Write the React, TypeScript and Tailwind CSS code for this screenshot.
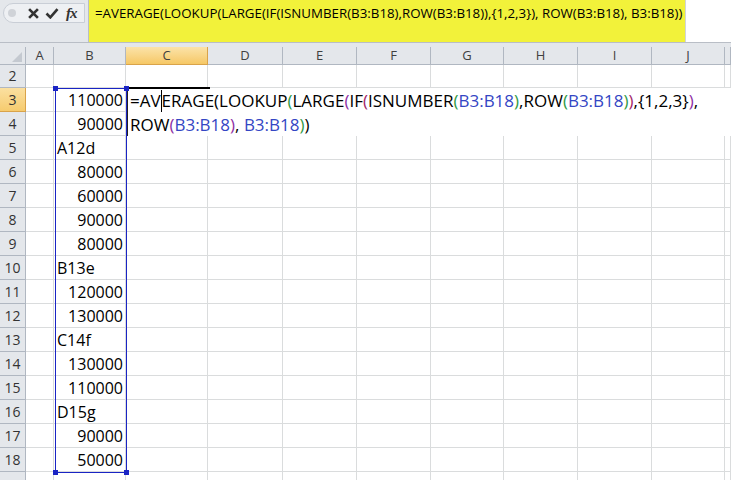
import React from "react";

const COLS = ["A", "B", "C", "D", "E", "F", "G", "H", "I", "J", ""];
const ROWS: { n: number; v: string }[] = [
  { n: 2, v: "" },
  { n: 3, v: "110000" },
  { n: 4, v: "90000" },
  { n: 5, v: "A12d" },
  { n: 6, v: "80000" },
  { n: 7, v: "60000" },
  { n: 8, v: "90000" },
  { n: 9, v: "80000" },
  { n: 10, v: "B13e" },
  { n: 11, v: "120000" },
  { n: 12, v: "130000" },
  { n: 13, v: "C14f" },
  { n: 14, v: "130000" },
  { n: 15, v: "110000" },
  { n: 16, v: "D15g" },
  { n: 17, v: "90000" },
  { n: 18, v: "50000" },
  { n: 19, v: "" },
];

const FORMULA = "=AVERAGE(LOOKUP(LARGE(IF(ISNUMBER(B3:B18),ROW(B3:B18)),{1,2,3}), ROW(B3:B18), B3:B18))";

const G = "text-[#2f9a45]";
const P = "text-[#8e2fa5]";
const R = "text-[#a3266a]";
const B = "text-[#3446c4]";

const gridCols = "grid-cols-[26px_28px_72px_82px_75px_74px_74px_73px_74px_74px_73px_1fr]";

function FormulaBar() {
  return (
    <div className="flex h-[43px] bg-[#e4e7eb] border-b border-[#b9bec6]">
      <div className="w-[88px] pt-[3px] pl-[3px]">
        <div className="flex items-center h-[20px] pl-[2px] rounded-l-full border border-[#c9ced6] bg-[#eef0f3] w-[82px]">
          <span className="w-[8px] h-[8px] rounded-full bg-[#d0d3d8] ml-[2px]" />
          <svg width="11" height="11" viewBox="0 0 10 10" className="ml-[12px]">
            <path d="M1 1 L9 9 M9 1 L1 9" stroke="#333" strokeWidth="2.4" />
          </svg>
          <svg width="14" height="11" viewBox="0 0 12 10" className="ml-[6px]">
            <path d="M1 5 L4.5 8.5 L11 1" stroke="#333" strokeWidth="2.4" fill="none" />
          </svg>
          <span className="ml-[7px] text-[15px] leading-none italic font-bold text-[#333] [font-family:'Liberation_Serif',serif] tracking-[-1px]">fx</span>
        </div>
      </div>
      <div className="w-[597px] bg-[#f2f23a] border-l border-[#b9bec6] pl-[6px] pt-[4px] text-[13.3px] leading-[18px] text-black [font-family:'Open_Sans',sans-serif] whitespace-nowrap">
        {FORMULA}
      </div>
      <div className="flex-1 bg-white border-l border-[#d0d4da]" />
    </div>
  );
}

function Header() {
  return (
    <>
      <div className="h-[18px] bg-[#e4e7eb] border-r border-b border-[#b0b7c1] relative">
        <svg width="10" height="10" viewBox="0 0 10 10" className="absolute right-[3px] bottom-[2px]">
          <path d="M10 0 L10 10 L0 10 Z" fill="#c4c9d0" />
        </svg>
      </div>
      {COLS.map((c, i) => (
        <div
          key={i}
          className={
            c === "C"
              ? "h-[18px] flex items-center justify-center text-[13px] text-[#404040] bg-gradient-to-b from-[#fbe3a8] to-[#f6c865] border-r border-b border-[#d9a34a]"
              : "h-[18px] flex items-center justify-center text-[13px] text-[#404040] bg-[#e4e7eb] border-r border-b border-[#b0b7c1]"
          }
        >
          {c}
        </div>
      ))}
    </>
  );
}

function Row({ n, v }: { n: number; v: string }) {
  const h = n === 2 ? "h-[23px]" : "h-[24px]";
  const isNum = /^\d+$/.test(v);
  return (
    <>
      <div
        className={
          n === 3
            ? `${h} flex items-end justify-center pb-[1px] text-[14px] text-[#333] bg-gradient-to-b from-[#fbe0a0] to-[#f6cb6e] border-r border-b border-[#d9a34a]`
            : `${h} flex items-end justify-center pb-[1px] text-[14px] text-[#333] bg-[#e4e7eb] border-r border-b border-[#b0b7c1]`
        }
      >
        {n < 19 ? n : ""}
      </div>
      {COLS.map((c, i) => (
        <div
          key={i}
          className={`${h} border-r border-b border-[#dadcdd] flex items-end pb-[0px] text-[16px] leading-[21px] text-black ${
            isNum ? "justify-end pr-[2px]" : "justify-start pl-[3px]"
          }`}
        >
          {c === "B" ? v : ""}
        </div>
      ))}
    </>
  );
}

export default function App() {
  return (
    <div className="w-[731px] h-[480px] overflow-hidden bg-white [font-family:'Open_Sans',sans-serif]">
      <FormulaBar />
      <div className="h-[4px] bg-[#e4e7eb]" />
      <div className="relative">
        <div className={`grid ${gridCols}`}>
          <Header />
          {ROWS.map((r) => (
            <Row key={r.n} n={r.n} v={r.v} />
          ))}
        </div>

        {/* in-cell editor */}
        <div className="absolute left-[127px] top-[41px] right-0 h-[48px] bg-white border-l border-[#222] pl-[2px] pt-[1px] text-[17px] leading-[24px] text-black whitespace-nowrap">
          <div className="absolute left-0 top-[-1px] w-[82px] h-[2px] bg-black" />
          <span>=AV</span>
          <span className="inline-block w-[1px] h-[22px] bg-black align-middle -mt-[3px]" />
          <span>ERAGE(LOOKUP</span>
          <span className={G}>(</span>
          <span>LARGE</span>
          <span className={P}>(</span>
          <span>IF</span>
          <span className={R}>(</span>
          <span>ISNUMBER</span>
          <span className={G}>(</span>
          <span className={B}>B3:B18</span>
          <span className={G}>)</span>
          <span>,ROW</span>
          <span className={G}>(</span>
          <span className={B}>B3:B18</span>
          <span className={G}>)</span>
          <span className={R}>)</span>
          <span>,{"{1,2,3}"}</span>
          <span className={P}>)</span>
          <span>,</span>
          <br />
          <span>ROW</span>
          <span className={P}>(</span>
          <span className={B}>B3:B18</span>
          <span className={P}>)</span>
          <span>, </span>
          <span className={B}>B3:B18</span>
          <span className={G}>)</span>
          <span>)</span>
        </div>

        {/* range finder on B3:B18 */}
        <div className="absolute left-[55px] top-[41px] w-[72px] h-[385px] border border-[#1a24c4]" />
        <div className="absolute left-[53px] top-[39px] w-[5px] h-[5px] bg-[#1a24c4]" />
        <div className="absolute left-[124px] top-[39px] w-[5px] h-[5px] bg-[#1a24c4]" />
        <div className="absolute left-[53px] top-[423px] w-[5px] h-[5px] bg-[#1a24c4]" />
        <div className="absolute left-[124px] top-[423px] w-[5px] h-[5px] bg-[#1a24c4]" />
      </div>
    </div>
  );
}
